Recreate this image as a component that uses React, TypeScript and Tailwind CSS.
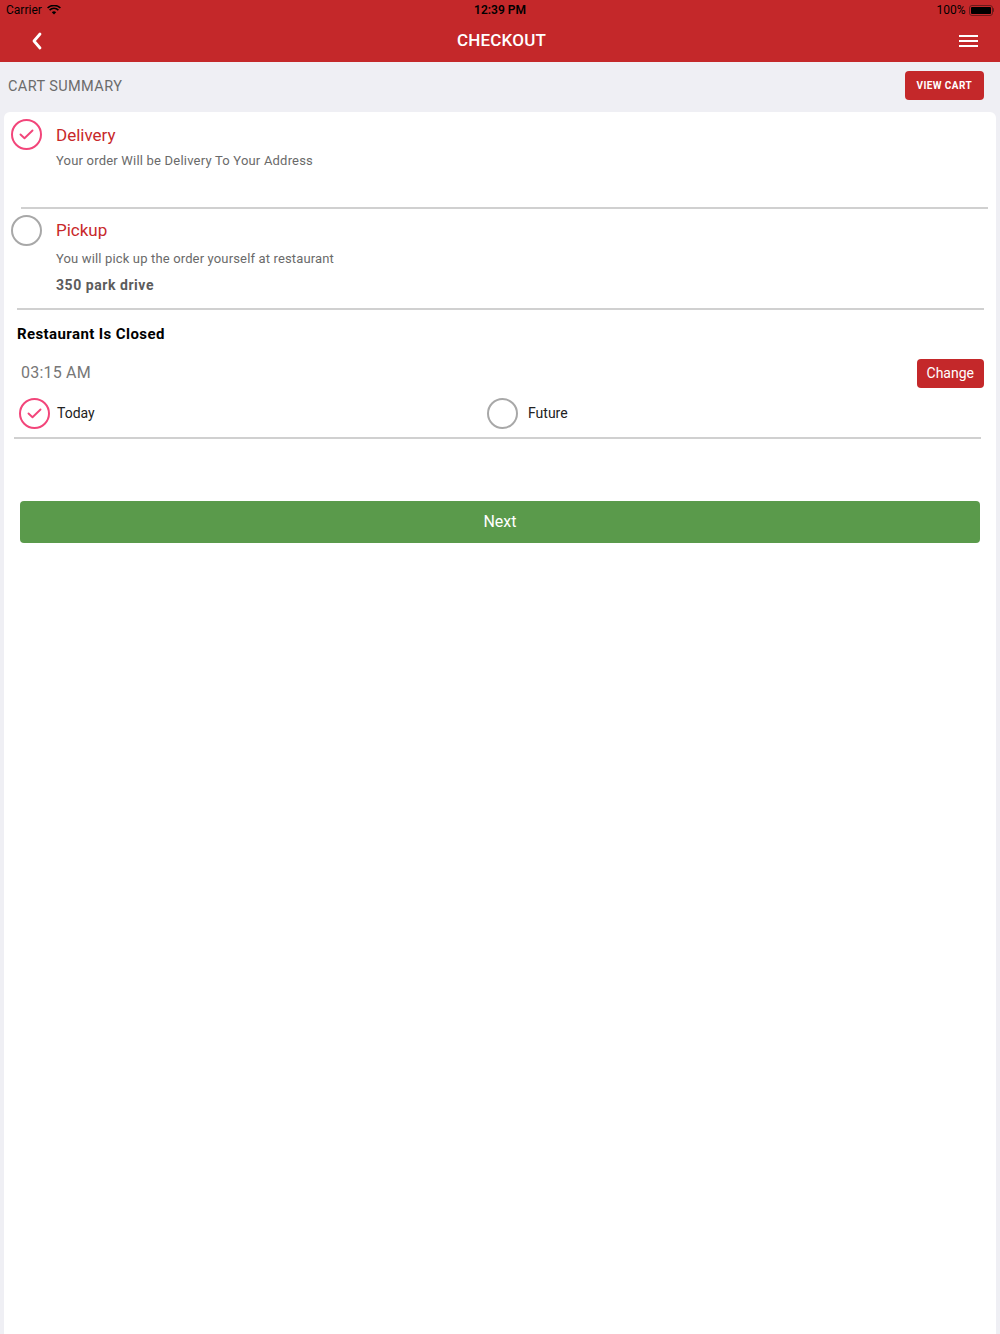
const RED = "bg-[#c4282a]"

function Radio({ checked }: { checked: boolean }) {
  if (checked) {
    return (
      <span className="flex h-[31px] w-[31px] shrink-0 items-center justify-center rounded-full border-2 border-[#f2457a]">
        <svg width="15" height="11" viewBox="0 0 15 11" fill="none">
          <path d="M1.5 5.5 L5.5 9.2 L13.5 1.5" stroke="#f2457a" strokeWidth="1.9" strokeLinecap="round" strokeLinejoin="round" />
        </svg>
      </span>
    )
  }
  return <span className="h-[31px] w-[31px] shrink-0 rounded-full border-2 border-[#a8a8a8]" />
}

function StatusBar() {
  return (
    <div className="relative flex h-[20px] items-center justify-between px-[6px] text-[12px] text-black">
      <div className="flex items-center gap-[5px]">
        <span>Carrier</span>
        <svg width="14" height="10" viewBox="0 0 14 10">
          <path d="M7 9.5 L4.8 7.2 A3.2 3.2 0 0 1 9.2 7.2 Z" fill="#000" />
          <path d="M2.6 5.1 A6.2 6.2 0 0 1 11.4 5.1" stroke="#000" strokeWidth="1.6" fill="none" />
          <path d="M0.6 3 A9.2 9.2 0 0 1 13.4 3" stroke="#000" strokeWidth="1.6" fill="none" />
        </svg>
      </div>
      <span className="absolute left-1/2 -translate-x-1/2 font-semibold">12:39 PM</span>
      <div className="flex items-center gap-[3px]">
        <span>100%</span>
        <span className="flex items-center">
          <span className="flex h-[11px] w-[24px] items-center rounded-[3px] border border-[#6b1a1a] p-[1px]">
            <span className="h-full w-full rounded-[1px] bg-black" />
          </span>
          <span className="h-[4px] w-[1.5px] rounded-r bg-[#6b1a1a]" />
        </span>
      </div>
    </div>
  )
}

function NavBar() {
  return (
    <div className="flex h-[42px] items-center justify-between px-[30px] pr-[22px] text-white">
      <svg width="14" height="18" viewBox="0 0 14 18" fill="none">
        <path d="M10 2 L4 9 L10 16" stroke="#fff" strokeWidth="2.8" strokeLinecap="round" strokeLinejoin="round" />
      </svg>
      <span className="text-[17px] font-medium tracking-[0.2px]">CHECKOUT</span>
      <svg width="19" height="14" viewBox="0 0 19 14">
        <rect x="0" y="1" width="19" height="2" fill="#fff" />
        <rect x="0" y="6" width="19" height="2" fill="#fff" />
        <rect x="0" y="11" width="19" height="2" fill="#fff" />
      </svg>
    </div>
  )
}

export default function App() {
  return (
    <div className="flex min-h-[1334px] flex-col bg-[#efeff4] font-['Roboto',sans-serif]">
      <div className={RED}>
        <StatusBar />
        <NavBar />
      </div>

      <div className="flex h-[50px] items-center justify-between pl-[8px] pr-[16px]">
        <span className="text-[14.5px] tracking-[0.4px] text-[#6b6b6b]">CART SUMMARY</span>
        <button className={`${RED} mb-[4px] h-[29px] rounded-[4px] px-[12px] text-[10px] font-bold tracking-[0.4px] text-white`}>
          VIEW CART
        </button>
      </div>

      <div className="mx-[4px] flex flex-1 flex-col rounded-t-[6px] bg-white">
        <div className="flex gap-[14px] pl-[7px] pt-[7px]">
          <Radio checked />
          <div className="flex flex-col pt-[5px]">
            <span className="text-[17px] leading-[22px] text-[#c8282a]">Delivery</span>
            <span className="mt-[5px] text-[13px] tracking-[0.2px] text-[#6a6a6a]">Your order Will be Delivery To Your Address</span>
          </div>
        </div>
        <div className="ml-[17px] mr-[8px] mt-[36px] h-[2px] bg-[#d0d0d0]" />

        <div className="flex gap-[14px] pl-[7px] pt-[6px]">
          <Radio checked={false} />
          <div className="flex flex-col pt-[4px]">
            <span className="text-[17px] leading-[22px] text-[#c8282a]">Pickup</span>
            <span className="mt-[8px] text-[13px] tracking-[0.15px] text-[#6a6a6a]">You will pick up the order yourself at restaurant</span>
            <span className="mt-[7px] text-[14px] font-bold tracking-[0.55px] text-[#5c5c5c]">350 park drive</span>
          </div>
        </div>
        <div className="ml-[13px] mr-[12px] mt-[12px] h-[2px] bg-[#d0d0d0]" />

        <div className="pl-[13px] pt-[13px] text-[15px] font-bold tracking-[0.4px] text-black">Restaurant Is Closed</div>

        <div className="mt-[13px] flex items-center justify-between pl-[17px] pr-[12px]">
          <span className="text-[16px] tracking-[0.2px] text-[#777]">03:15 AM</span>
          <button className={`${RED} h-[29px] rounded-[4px] px-[10px] text-[14px] text-white`}>Change</button>
        </div>

        <div className="mt-[10px] flex items-center pl-[15px]">
          <div className="flex w-[468px] items-center gap-[7px]">
            <Radio checked />
            <span className="text-[14px] text-[#222]">Today</span>
          </div>
          <div className="flex items-center gap-[10px]">
            <Radio checked={false} />
            <span className="text-[14px] text-[#222]">Future</span>
          </div>
        </div>
        <div className="ml-[10px] mr-[15px] mt-[8px] h-[2px] bg-[#d0d0d0]" />

        <button className="mx-[16px] mt-[62px] h-[42px] rounded-[4px] bg-[#5a9a4b] text-[16px] text-white">Next</button>
      </div>
    </div>
  )
}
